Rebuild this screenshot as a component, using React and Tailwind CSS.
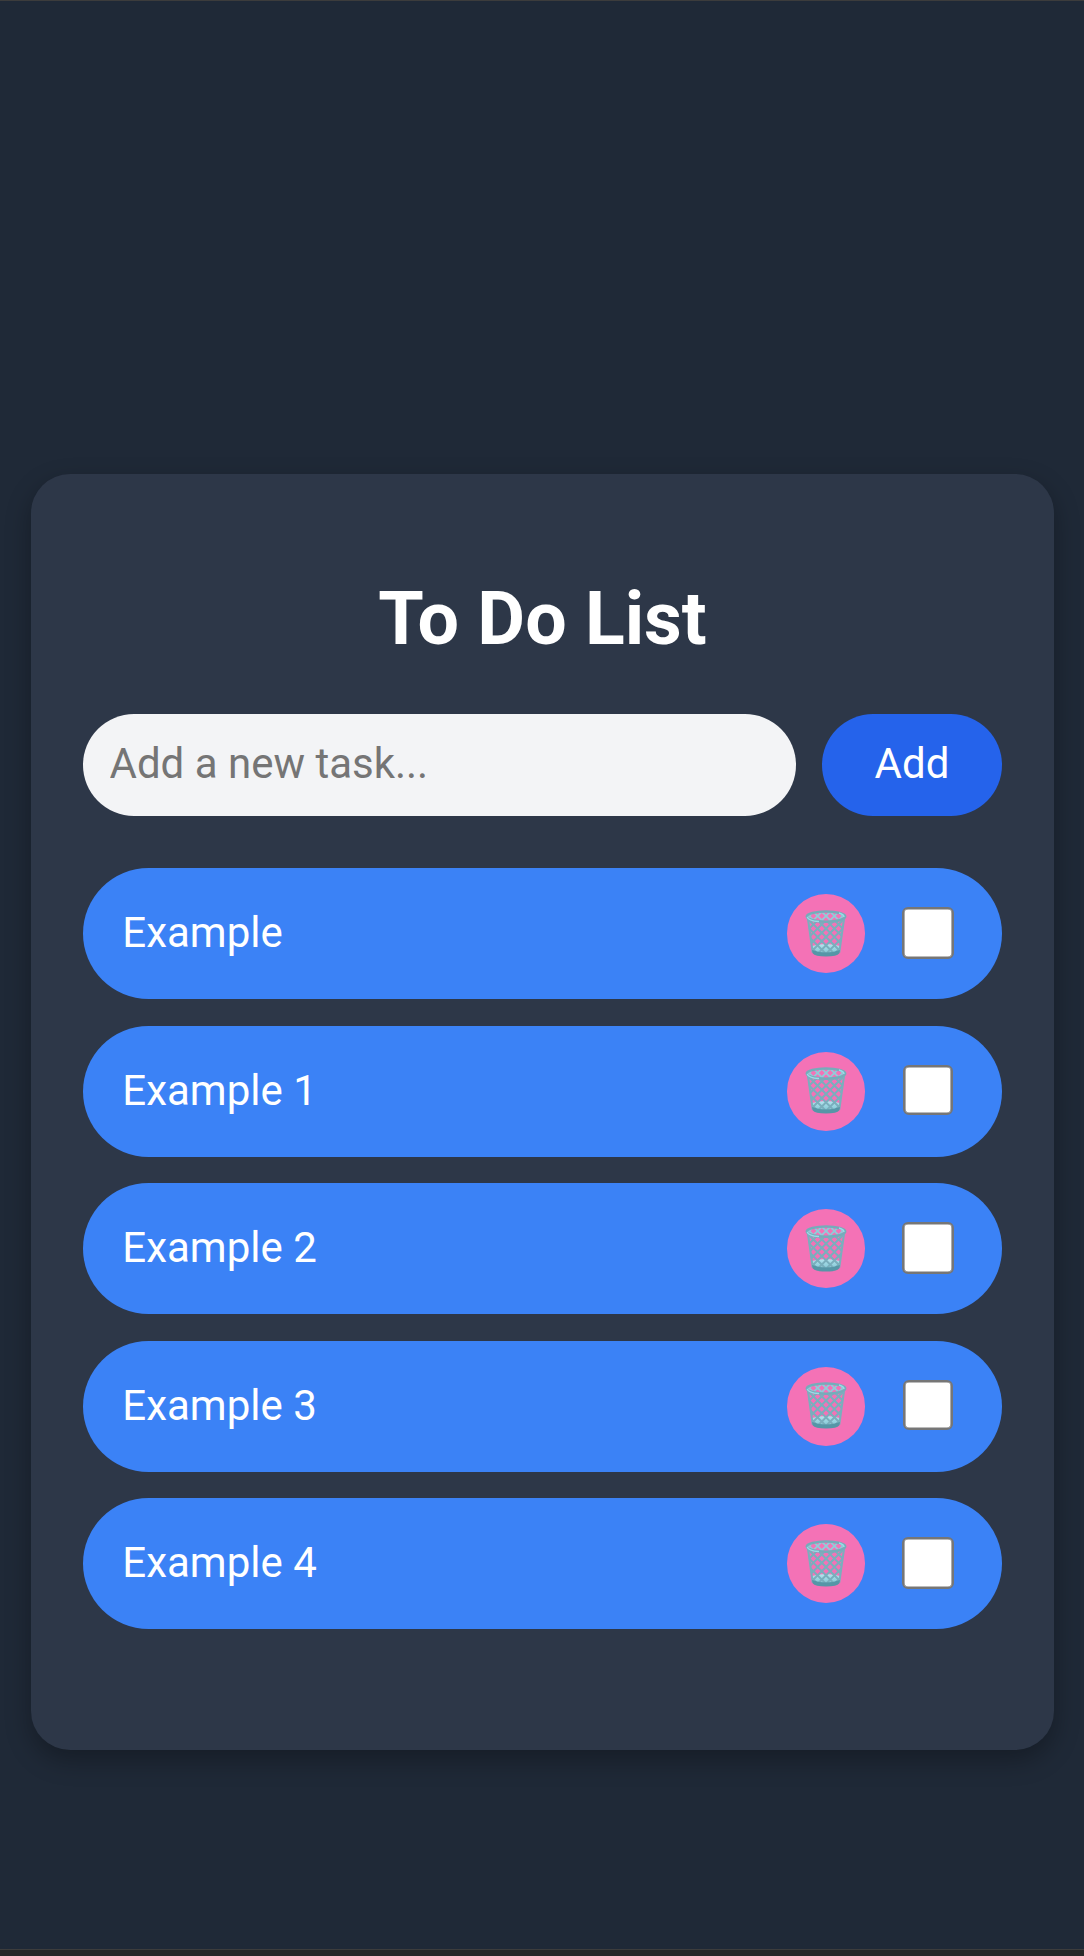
const tasks = ['Example', 'Example 1', 'Example 2', 'Example 3', 'Example 4'];

const meshOffsets = [-33.6, -25.2, -16.8, -8.4, 0, 8.4, 16.8, 25.2, 33.6];

function Basket() {
  return (
    <svg className="h-[48px] w-[42px]" viewBox="0 0 42 48" fill="none" aria-hidden="true">
      <defs>
        <clipPath id="basketBody">
          <path d="M2.5 9Q21 17 39.5 9L34.5 42.5Q21 47 7.5 42.5Z" />
        </clipPath>
        <clipPath id="basketRim">
          <ellipse cx="21" cy="6.6" rx="18.6" ry="5" />
        </clipPath>
        <linearGradient id="base" x1="0" y1="34" x2="0" y2="43" gradientUnits="userSpaceOnUse">
          <stop stopColor="#b5e4ee" />
          <stop offset="1" stopColor="#84c8d6" />
        </linearGradient>
      </defs>
      <path d="M7.2 36Q21 32 34.8 36L34 42Q21 46 8 42Z" fill="url(#base)" />
      <g clipPath="url(#basketBody)" stroke="#7aafbd" strokeWidth="2">
        {meshOffsets.map((x) => (
          <path key={x} d={`M${x + 2} 8l38 38M${x + 40} 8l-38 38`} />
        ))}
      </g>
      <g clipPath="url(#basketRim)" stroke="#92cbd8" strokeWidth="1.8">
        {meshOffsets.map((x) => (
          <path key={x} d={`M${x + 15} 0l12 12M${x + 27} 0l-12 12`} />
        ))}
      </g>
      <path d="M3 9 7.7 42.5M39 9 34.3 42.5" stroke="#7aafbd" strokeWidth="2" />
      <path d="M7 40Q21 45 35 40L34.4 43.3Q32 46.5 21 46.5T7.6 43.3Z" fill="#5696a7" />
      <ellipse cx="21" cy="6.6" rx="19.2" ry="5.1" stroke="#76acba" strokeWidth="2.5" />
      <path d="M2.2 6.8C3 10 9 11.2 14 11.5M34 3Q39 4.6 39 7" stroke="#9cdbe7" strokeWidth="1.4" />
    </svg>
  );
}

export default function App() {
  return (
    <div className="flex h-[1956px] flex-col border-t border-[#3c3c3c] bg-[#1f2937] font-[Roboto,sans-serif] text-[42px] leading-[49px] text-white">
      <main className="flex flex-1 flex-col px-[31px] pt-[473px]">
        <section className="flex h-[1276px] w-[1023px] flex-col rounded-[39px] bg-[#2d3748] px-[52px] pt-[102px] shadow-[0_10px_26px_rgba(0,0,0,0.3)]">
          <h1 className="text-center text-[73.5px] leading-[86px] font-bold">To Do List</h1>
          <form className="mt-[52px] flex h-[102px] gap-[26px]">
            <input
              className="w-[713px] rounded-[51px] bg-[#f3f4f6] px-[26.5px] pb-1 text-[#1f2937] placeholder:text-[#757575]"
              placeholder="Add a new task..."
            />
            <button type="button" className="flex-1 rounded-[51px] bg-[#2563eb] pb-1">Add</button>
          </form>
          <ul className="mt-[52px] flex flex-col gap-[26.5px]">
            {tasks.map((task) => (
              <li key={task} className="group flex h-[131px] items-center rounded-full bg-[#3b82f6] pr-[48px] pl-[39.3px]">
                <span className="flex-1 pb-0.5">{task}</span>
                <button type="button" aria-label="Delete" className="flex h-[79px] w-[78px] items-center justify-center rounded-full bg-[#f472b6]">
                  <Basket />
                </button>
                <input type="checkbox" className="mb-px ml-[37px] size-[52px] appearance-none rounded-[6px] border-2 border-[#767676] bg-white shadow-[inset_0_0_0_0.6px_#767676] group-even:mr-px group-even:mb-[2px] group-even:ml-[38px] group-even:size-[50px]" />
              </li>
            ))}
          </ul>
        </section>
      </main>
      <footer className="h-[7px] border-t border-[#3c3c3c] bg-[#282828]" />
    </div>
  );
}
